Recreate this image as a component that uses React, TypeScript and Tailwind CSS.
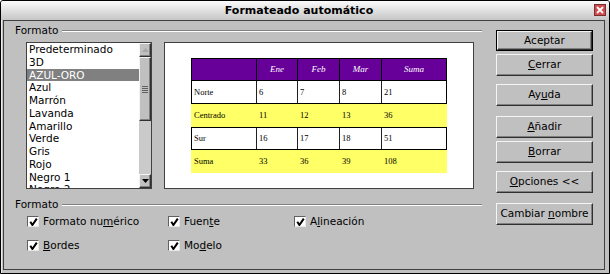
import type { ReactNode } from "react";

const raised =
	"bg-[#c0c0c0] border border-t-[#f4f4f4] border-l-[#f4f4f4] border-r-[#303030] border-b-[#303030] shadow-[inset_-1px_-1px_0_#808080]";
const sunken = "border border-[#404040]";

const items = ["Predeterminado", "3D", "AZUL-ORO", "Azul", "Marrón", "Lavanda", "Amarillo", "Verde", "Gris", "Rojo", "Negro 1", "Negro 2"];
const cols = ["w-[65px]", "w-[41px]", "w-[42px]", "w-[42px]", "w-[64px]"];
const rows = [
	{ name: "Norte", vals: ["6", "7", "8", "21"], yellow: false },
	{ name: "Centrado", vals: ["11", "12", "13", "36"], yellow: true },
	{ name: "Sur", vals: ["16", "17", "18", "51"], yellow: false },
	{ name: "Suma", vals: ["33", "36", "39", "108"], yellow: true },
];

function Button({ children, className = "", isDefault = false }: { children: ReactNode; className?: string; isDefault?: boolean }) {
	if (isDefault)
		return (
			<div className={`w-[97px] h-[21px] border border-black ${className}`}>
				<div className={`w-full h-full flex items-center justify-center ${raised}`}>
					<span>{children}</span>
				</div>
			</div>
		);
	return (
		<div className={`w-[97px] h-[22px] flex items-center justify-center ${raised} ${className}`}>
			<span className="whitespace-pre">{children}</span>
		</div>
	);
}

function Check({ children, className = "" }: { children: ReactNode; className?: string }) {
	return (
		<div className={`flex items-center h-[13px] ${className}`}>
			<div className="w-[12px] h-[11px] bg-white border border-t-[#606060] border-l-[#606060] border-r-[#e8e8e8] border-b-[#e8e8e8] flex items-center justify-center">
				<svg width="9" height="8" viewBox="0 0 9 8">
					<path d="M1.3 3.8 L3.4 7 L7.8 0.6" fill="none" stroke="#000" strokeWidth="2" />
				</svg>
			</div>
			<span className="ml-[4px]">{children}</span>
		</div>
	);
}

function GroupHeader({ className = "" }: { className?: string }) {
	return (
		<div className={`flex items-center h-[13px] pl-[11px] ${className}`}>
			<span>Formato</span>
			<div className="flex-1 ml-[4px] h-[2px] border-t border-t-[#808080] border-b border-b-white" />
		</div>
	);
}

function Arrow({ up, color }: { up?: boolean; color: string }) {
	return (
		<svg width="7" height="4" viewBox="0 0 7 4">
			<path d={up ? "M0 4 L3.5 0 L7 4 Z" : "M0 0 L7 0 L3.5 4 Z"} fill={color} />
		</svg>
	);
}

export default function App() {
	return (
		<div className="w-[610px] h-[274px] flex flex-col bg-[#c0c0c0] border border-black rounded-t-[3px] overflow-hidden font-['DejaVu_Sans',sans-serif] text-[10.5px] text-black antialiased">
			{/* title bar */}
			<div className="relative h-[19px] flex items-center justify-center pr-[12px] pt-[2px] bg-gradient-to-b from-[#fbfbfb] to-[#c6c6c6]">
				<span className="font-bold text-[11px]">Formateado automático</span>
				<div className="absolute right-[3px] top-[3px] w-[12px] h-[12px] bg-[#d24a4a] border border-[#7a3030] flex items-center justify-center">
					<svg width="8" height="8" viewBox="0 0 8 8">
						<path d="M1 1 L7 7 M7 1 L1 7" stroke="#fff" strokeWidth="1.8" />
					</svg>
				</div>
			</div>

			<div className="flex-1 pl-[2px] pr-[4px] pb-[3px] shadow-[inset_1px_0_0_#ececec]">
				<div className="h-full border border-[#404040] flex">
					{/* left column */}
					<div className="w-[478px] flex flex-col">
						<GroupHeader className="mt-[3px]" />
						<div className="flex mt-[5px] pl-[22px]">
							{/* list box */}
							<div className={`w-[126px] h-[147px] bg-white flex ${sunken}`}>
								<div className="flex-1 overflow-hidden">
									{items.map((it, i) => (
										<div key={it} className={`h-[12.75px] leading-[12.75px] pl-[2px] whitespace-nowrap ${i === 2 ? "bg-[#808080] text-white" : ""}`}>
											{it}
										</div>
									))}
								</div>
								<div className="w-[12px] flex flex-col bg-[#cacaca]">
									<div className={`h-[14px] flex items-center justify-center ${raised}`}>
										<Arrow up color="#a8a8a8" />
									</div>
									<div className={`h-[64px] flex flex-col items-center justify-center gap-[1px] ${raised}`}>
										{[0, 1, 2, 3].map((k) => (
											<div key={k} className="w-[6px] h-[1px] bg-[#606060]" />
										))}
									</div>
									<div className="flex-1" />
									<div className={`h-[14px] flex items-center justify-center ${raised}`}>
										<Arrow color="#000" />
									</div>
								</div>
							</div>

							{/* preview */}
							<div className={`ml-[12px] w-[310px] h-[147px] bg-white flex items-center justify-center ${sunken}`}>
								<div className="w-[256px] font-['Liberation_Serif',serif] text-[8.5px] text-black">
									<div className="flex h-[23px] bg-[#660099] border border-black">
										{["", "Ene", "Feb", "Mar", "Suma"].map((h, i) => (
											<div key={i} className={`${cols[i]} h-full flex items-center justify-center italic text-white text-[9px] ${i < 4 ? "border-r border-black" : ""}`}>
												{h}
											</div>
										))}
									</div>
									{rows.map((r, ri) => (
										<div
											key={r.name}
											className={`flex h-[23px] border-x ${
												r.yellow ? "bg-[#ffff66] border-transparent" : ri === 2 ? "bg-white border-y border-black" : "bg-white border-b border-black"
											}`}
										>
											{[r.name, ...r.vals].map((v, i) => (
												<div key={i} className={`${cols[i]} h-full flex items-center pl-[2px] ${i < 4 ? (r.yellow ? "border-r border-transparent" : "border-r border-[#202020]") : ""}`}>
													{v}
												</div>
											))}
										</div>
									))}
								</div>
							</div>
						</div>

						<GroupHeader className="mt-[9px]" />
						<div className="flex mt-[4px] pl-[23px]">
							<Check className="w-[141px]">
								Formato nu<u>m</u>érico
							</Check>
							<Check className="w-[126px]">
								Fuen<u>t</u>e
							</Check>
							<Check>
								A<u>l</u>ineación
							</Check>
						</div>
						<div className="flex mt-[11px] pl-[23px]">
							<Check className="w-[141px]">
								<u>B</u>ordes
							</Check>
							<Check>
								Mo<u>d</u>elo
							</Check>
						</div>
					</div>

					{/* right column */}
					<div className="ml-[14px] flex flex-col">
						<Button isDefault className="mt-[9px]">
							Aceptar
						</Button>
						<Button className="mt-[3px]">
							<u>C</u>errar
						</Button>
						<Button className="mt-[8px]">
							Ay<u>u</u>da
						</Button>
						<Button className="mt-[10px]">
							<u>A</u>ñadir
						</Button>
						<Button className="mt-[3px]">
							<u>B</u>orrar
						</Button>
						<Button className="mt-[8px]">
							<u>O</u>pciones &lt;&lt;
						</Button>
						<Button className="mt-[10px]">
							{"Cambiar "}
							<u>n</u>ombre
						</Button>
					</div>
				</div>
			</div>
		</div>
	);
}
